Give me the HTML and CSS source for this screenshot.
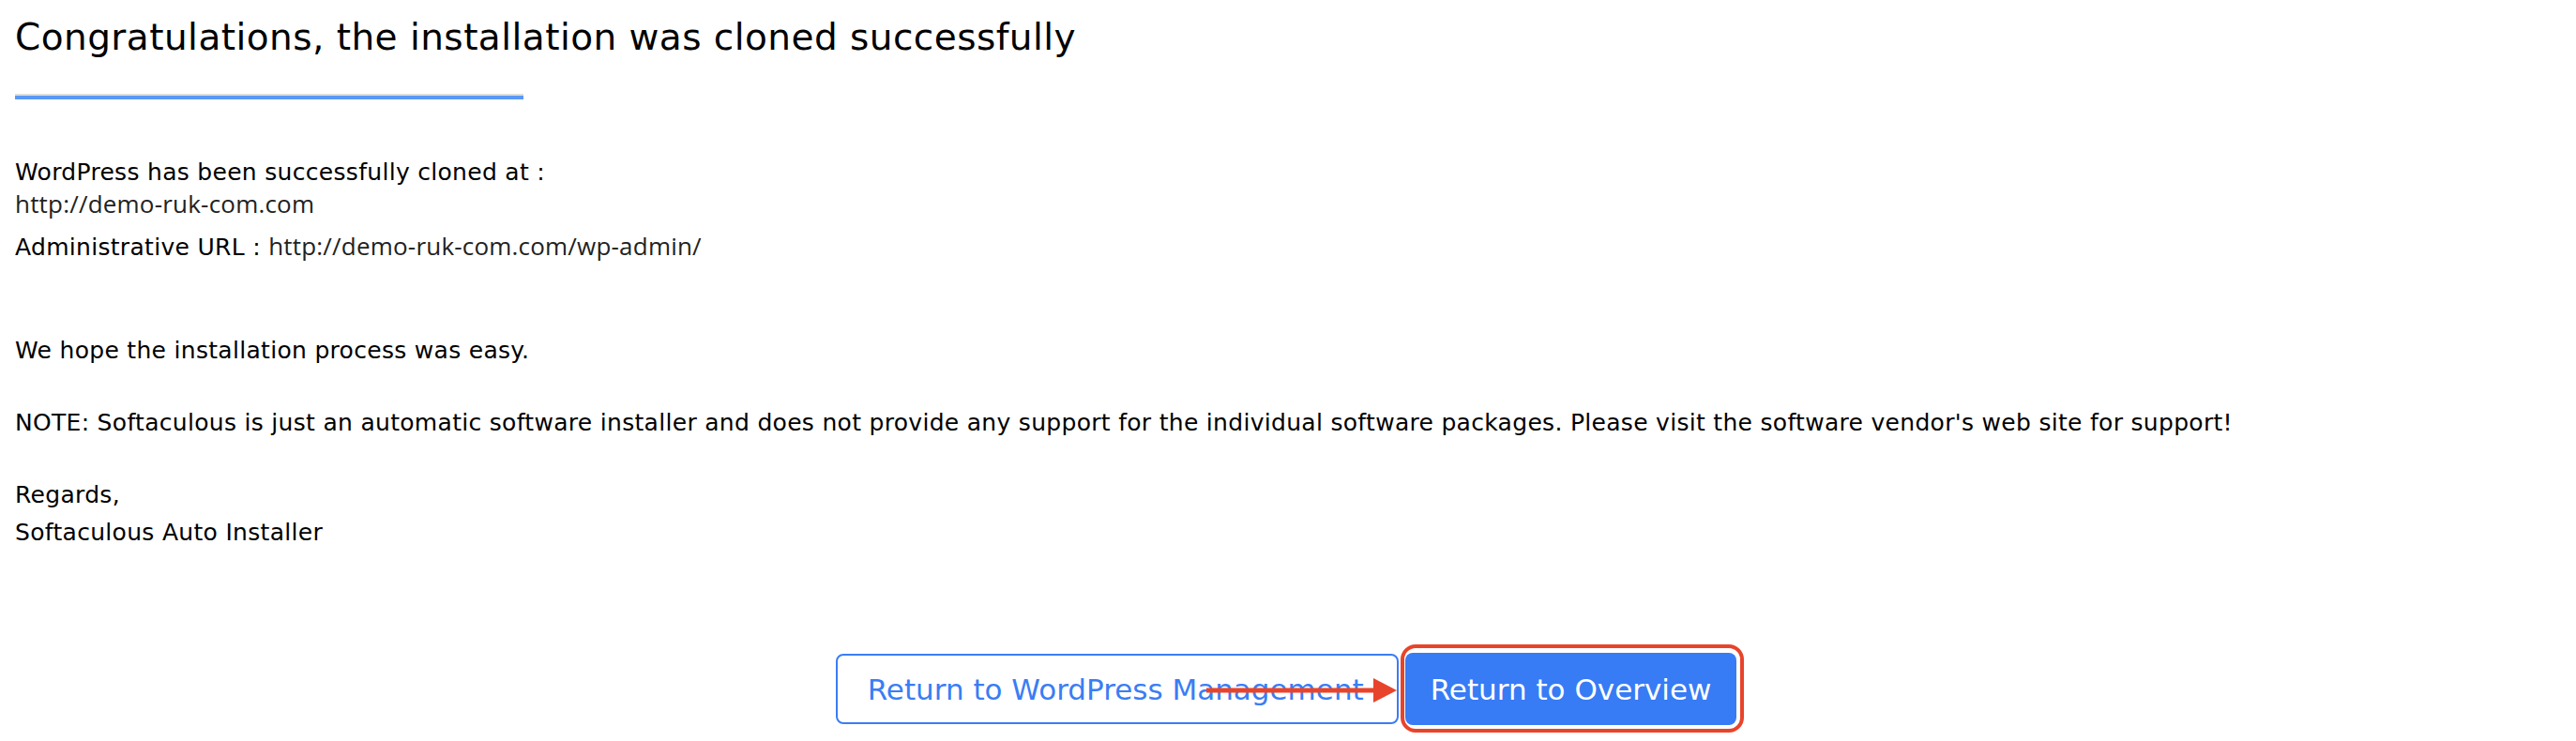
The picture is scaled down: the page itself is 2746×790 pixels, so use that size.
FILE: index.html
```html
<!DOCTYPE html>
<html lang="en">
<head>
<meta charset="utf-8">
<title>Clone successful</title>
<link rel="stylesheet" href="styles.css">
</head>
<body>
<main class="page">
  <h1 class="title">Congratulations, the installation was cloned successfully</h1>
  <div class="divider"></div>

  <div class="info">
    <div class="line-cloned">WordPress has been successfully cloned at :</div>
    <div class="url url-block">http://demo-ruk-com.com</div>
    <div class="line-admin">Administrative URL : <span class="url">http://demo-ruk-com.com/wp-admin/</span></div>
  </div>

  <div class="message">
    <p class="para">We hope the installation process was easy.</p>
    <p class="para">NOTE: Softaculous is just an automatic software installer and does not provide any support for the individual software packages. Please visit the software vendor's web site for support!</p>
    <p class="para para-last">Regards,<br>Softaculous Auto Installer</p>
  </div>

  <div class="actions-row">
    <div class="actions">
      <a class="btn btn-outline" href="#">Return to WordPress Management</a>
      <a class="btn btn-primary" href="#">Return to Overview</a>
      <svg class="arrow" width="206" height="32" viewBox="0 0 206 32" aria-hidden="true">
        <rect x="0" y="13.5" width="180" height="5" fill="#e8442b"/>
        <polygon points="178,3 203,16 178,29" fill="#e8442b"/>
      </svg>
    </div>
  </div>
</main>
</body>
</html>
```
FILE: styles.css
```css
html, body {
  margin: 0;
  padding: 0;
  background: #ffffff;
}

.page {
  box-sizing: border-box;
  min-height: 100vh;
  padding: 15px 16px 17px 16px;
  font-family: "DejaVu Sans", "Open Sans", sans-serif;
  color: #000000;
}

.title {
  margin: 0;
  font-size: 39px;
  font-weight: 400;
  line-height: 50px;
  letter-spacing: 0.45px;
  color: #000000;
}

.divider {
  margin-top: 35px;
  width: 542px;
  height: 4px;
  border-top: 2px solid #dedede;
  background: #5b98f6;
}

.info {
  margin-top: 65px;
  font-size: 25px;
  letter-spacing: 0.3px;
}

.line-cloned {
  line-height: 26px;
}

.url {
  font-family: "Open Sans", "Noto Sans", sans-serif;
  font-size: 26px;
  letter-spacing: 0.2px;
  color: #222222;
  line-height: 26px;
}

.url-block {
  margin-top: 8px;
  line-height: 24px;
}

.line-admin {
  margin-top: 15px;
  line-height: 40px;
}

.message {
  margin-top: 70px;
  font-size: 25px;
  line-height: 40px;
  letter-spacing: 0.3px;
}

.para {
  margin: 0 0 37px 0;
}

.para-last {
  margin-bottom: 0;
}

.actions-row {
  margin-top: 108px;
  padding-right: 4px;
  display: flex;
  justify-content: center;
}

.actions {
  position: relative;
  display: inline-flex;
  align-items: center;
  gap: 7px;
}

.btn {
  display: flex;
  align-items: center;
  box-sizing: border-box;
  font-family: "DejaVu Sans", sans-serif;
  font-size: 31px;
  text-decoration: none;
  border-radius: 8px;
  white-space: nowrap;
}

.btn-outline {
  height: 75px;
  padding: 0 35px 0 32px;
  border: 2px solid #3a7df4;
  color: #3a7df4;
  background: #ffffff;
}

.btn-primary {
  position: relative;
  height: 77px;
  padding: 0 27px;
  background: #377bf5;
  color: #ffffff;
}

.btn-primary::after {
  content: "";
  position: absolute;
  top: -9px;
  bottom: -8px;
  left: -5px;
  right: -8px;
  border: 4px solid #e8442b;
  border-radius: 16px;
  pointer-events: none;
}

.arrow {
  position: absolute;
  left: 395px;
  top: 24px;
}
```
